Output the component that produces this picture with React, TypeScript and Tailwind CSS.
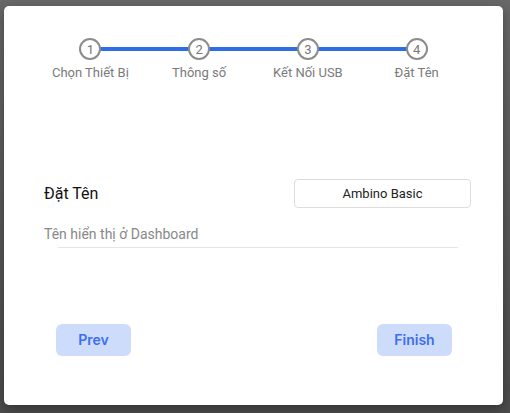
const steps = ['Chọn Thiết Bị', 'Thông số', 'Kết Nối USB', 'Đặt Tên'];

const Stepper = () => (
  <div className="grid grid-cols-4">
    {steps.map((label, i) => (
      <div key={label} className="relative flex flex-col items-center">
        {i < steps.length - 1 ? (
          <div className="absolute top-[9px] left-1/2 h-[4px] w-full bg-[#2f6de6]" />
        ) : null}
        <div className="relative z-10 flex h-[22px] w-[22px] items-center justify-center rounded-full border-2 border-[#8c8c8c] bg-white text-[13px] leading-none text-[#777]">
          {i + 1}
        </div>
        <span className="mt-[5px] text-[13px] leading-4 text-[#7a7a7a]">
          {label}
        </span>
      </div>
    ))}
  </div>
);

export default function App() {
  return (
    <div
      className="h-[413px] w-[510px] bg-gradient-to-b from-[#686868] to-[#4c4c4c] pt-[6px] pl-[4px]"
      style={{ fontFamily: 'Roboto, "Liberation Sans", sans-serif' }}
    >
      <div className="flex h-[399px] w-[499px] flex-col rounded-[5px] bg-white px-8 pt-8 shadow-[0_4px_12px_rgba(0,0,0,0.35)]">
        <Stepper />

        <div className="mt-[98px] flex items-center justify-between">
          <span className="ml-2 text-base text-[#111]">Đặt Tên</span>
          <div className="flex h-[29px] w-[177px] items-center justify-center rounded-[4px] border border-[#dcdcdc] text-[13px] text-[#222]">
            Ambino Basic
          </div>
        </div>

        <span className="mt-4 ml-2 text-sm leading-5 text-[#888]">
          Tên hiển thị ở Dashboard
        </span>
        <div className="mt-[3px] mr-[13px] ml-[22px] h-px bg-[#e6e6e6]" />

        <div
          className="mt-[76px] flex justify-between px-5"
          style={{ fontFamily: 'Inter, "Liberation Sans", sans-serif' }}
        >
          <button className="h-8 w-[75px] rounded-md bg-[#cedcfb] text-sm font-semibold text-[#3b6ef0]">
            Prev
          </button>
          <button className="mr-[-1px] h-8 w-[75px] rounded-md bg-[#cedcfb] text-sm font-semibold text-[#3b6ef0]">
            Finish
          </button>
        </div>
      </div>
    </div>
  );
}
